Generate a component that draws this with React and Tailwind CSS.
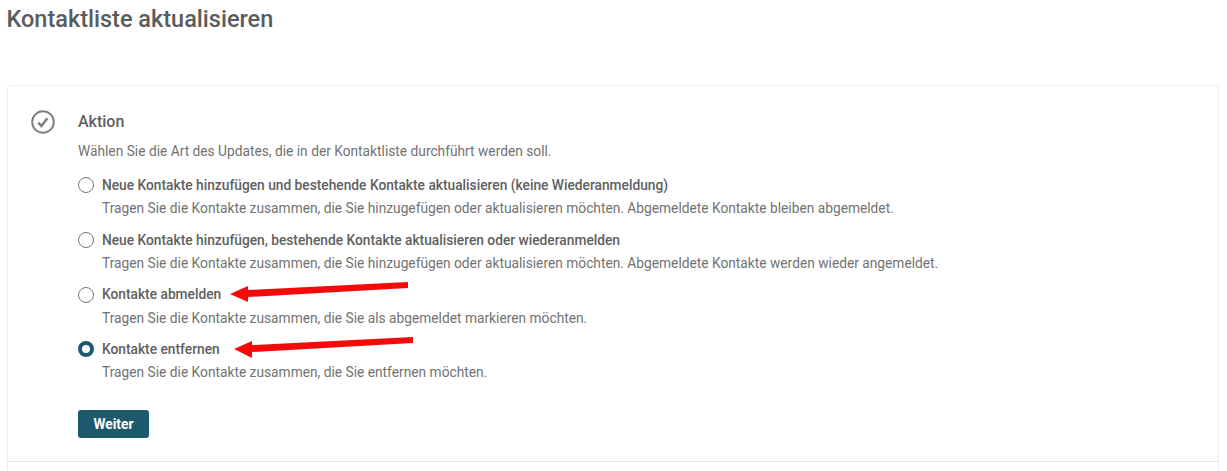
const options = [
  {
    title: 'Neue Kontakte hinzufügen und bestehende Kontakte aktualisieren (keine Wiederanmeldung)',
    text: 'Tragen Sie die Kontakte zusammen, die Sie hinzugefügen oder aktualisieren möchten. Abgemeldete Kontakte bleiben abgemeldet.',
  },
  {
    title: 'Neue Kontakte hinzufügen, bestehende Kontakte aktualisieren oder wiederanmelden',
    text: 'Tragen Sie die Kontakte zusammen, die Sie hinzugefügen oder aktualisieren möchten. Abgemeldete Kontakte werden wieder angemeldet.',
  },
  {
    title: 'Kontakte abmelden',
    text: 'Tragen Sie die Kontakte zusammen, die Sie als abgemeldet markieren möchten.',
  },
  {
    title: 'Kontakte entfernen',
    text: 'Tragen Sie die Kontakte zusammen, die Sie entfernen möchten.',
    checked: true,
  },
]

function Radio({ checked }) {
  if (checked) {
    return <span className="h-4 w-4 shrink-0 rounded-full border-[4px] border-[#1c5a6b] bg-white" />
  }
  return <span className="h-4 w-4 shrink-0 rounded-full border border-[#77787a] bg-white" />
}

export default function App() {
  return (
    <div className="relative h-[471px] overflow-hidden bg-white font-['Roboto',sans-serif] text-[#727272]">
      <h1 className="pl-[6.500px] pt-[5px] text-[23.5px] font-medium leading-[28px] text-[#5a5c5e]">Kontaktliste aktualisieren</h1>

      <div className="ml-[7px] mr-2 mt-[52px] h-[500px] rounded-[3px] border border-[#efefef]">
        <div className="flex border-b border-[#e6e6e6] pb-[23px] pl-[23px] pt-6">
          <svg className="mt-0 h-6 w-6 shrink-0" viewBox="0 0 24 24" fill="none">
            <circle cx="12" cy="12" r="10.8" stroke="#808080" strokeWidth="2" />
            <path d="M7.4 12.6l3 3.400 6-7.800" stroke="#808080" strokeWidth="2.600" />
          </svg>
          <div className="ml-[23px]">
            <h2 className="text-base font-medium leading-6 text-[#606060]">Aktion</h2>
            <p className="mt-[7px] text-[13.75px] leading-5">
              Wählen Sie die Art des Updates, die in der Kontaktliste durchführt werden soll.
            </p>

            <div className="mt-[14.400px] flex flex-col gap-[11.7px]">
              {options.map((option) => (
                <div key={option.title}>
                  <label className="flex h-5 items-center gap-2">
                    <Radio checked={option.checked} />
                    <span className="text-[13.75px] font-medium text-[#606060]">{option.title}</span>
                  </label>
                  <p className="ml-6 mt-1 text-[13.75px] leading-[19px]">{option.text}</p>
                </div>
              ))}
            </div>

            <button className="mt-[28px] block h-7 w-[71px] rounded-[3px] bg-[#1c5a6b] text-[13.75px] font-bold text-white">
              Weiter
            </button>
          </div>
        </div>
      </div>

      {/* annotation arrows on top of the screenshot */}
      <svg className="absolute left-0 top-0 h-[471px] w-[1227px]" viewBox="0 0 1227 471">
        <path d="M230 294L248 286V290L408 282V288L248 297V302Z" fill="#f50a0a" />
        <path d="M234 349L252 341V345L413 337V343L252 352V358Z" fill="#f50a0a" />
      </svg>
    </div>
  )
}
